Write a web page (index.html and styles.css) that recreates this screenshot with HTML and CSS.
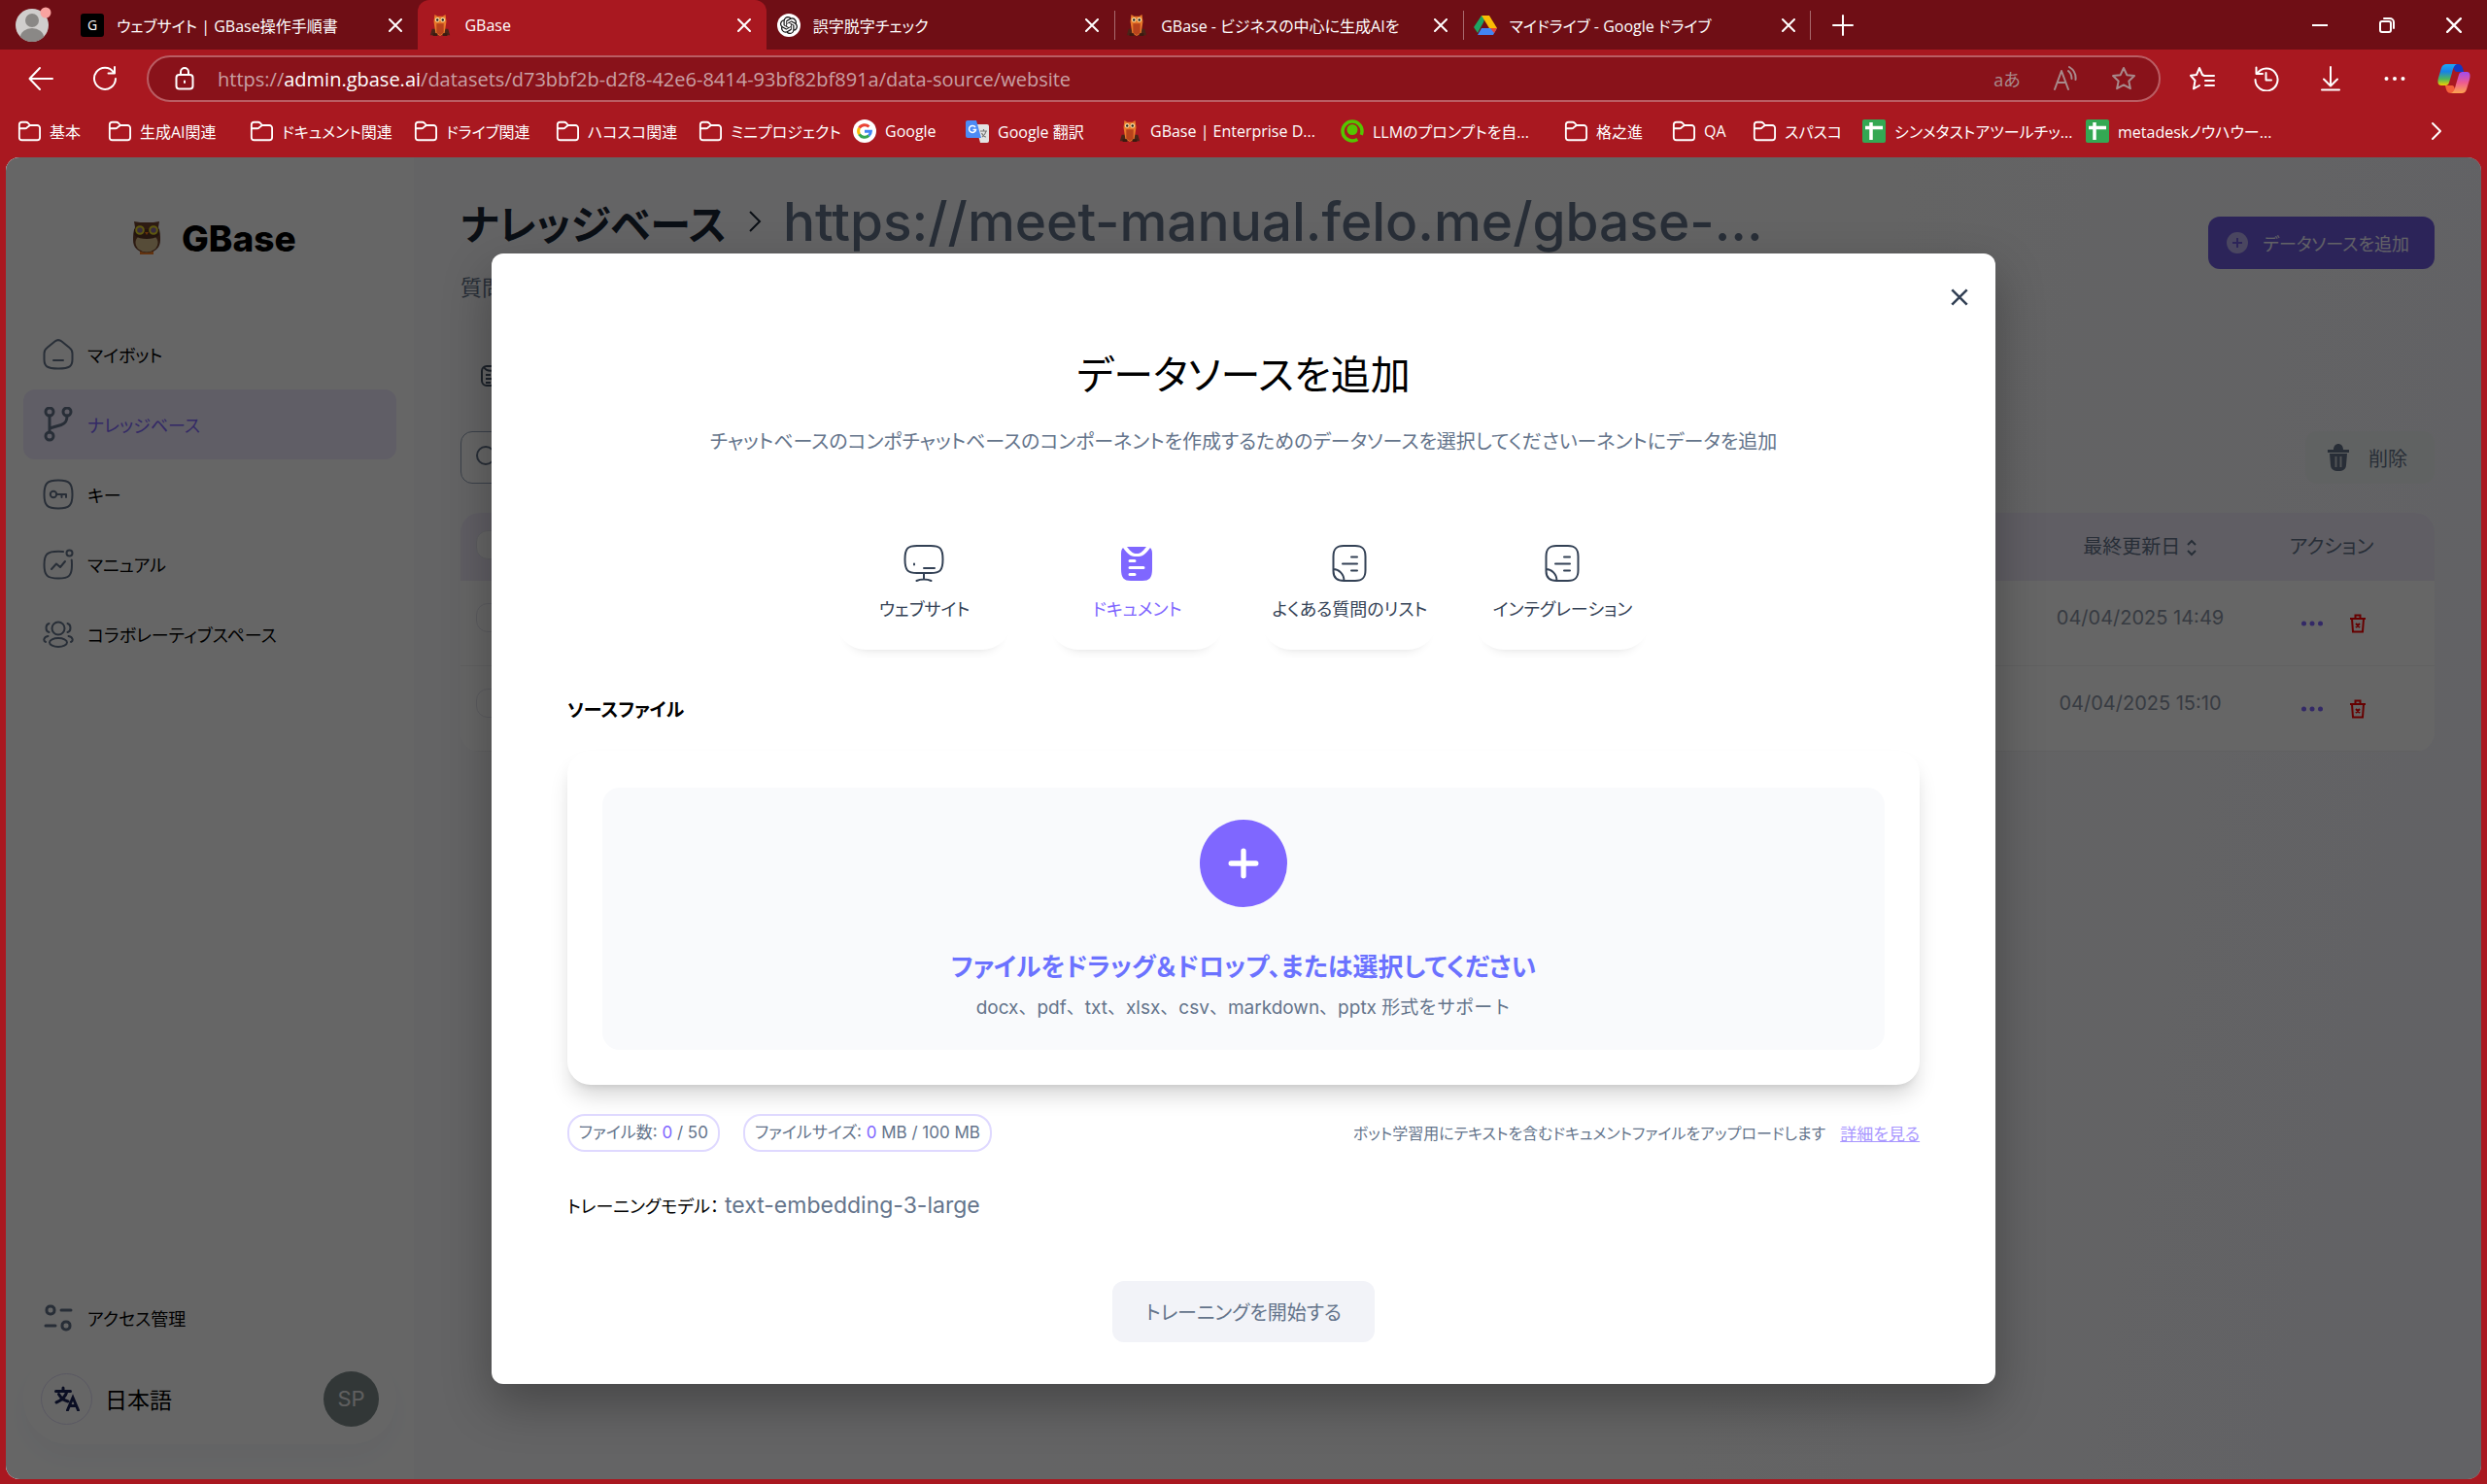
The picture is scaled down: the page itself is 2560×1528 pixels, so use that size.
FILE: index.html
```html
<!DOCTYPE html>
<html lang="ja">
<head>
<meta charset="utf-8">
<title>GBase</title>
<link rel="stylesheet" href="styles.css">
</head>
<body>
<svg class="defs" aria-hidden="true">
  <symbol id="x" viewBox="0 0 14 14"><path d="M1 1 13 13M13 1 1 13"/></symbol>
  <symbol id="folder" viewBox="0 0 26 26"><path d="M2 6a3 3 0 0 1 3-3h4.500a3 3 0 0 1 2.200 1L14 6.500h8a3 3 0 0 1 3 3V20a3 3 0 0 1-3 3H5a3 3 0 0 1-3-3zM2 10h6.500a3 3 0 0 0 2.200-1L14 6.500"/></symbol>
  <symbol id="owl-small" viewBox="0 0 24 26"><path fill="#4a2418" d="M3 17h18l2 7H1z"/><path fill="#e8792a" d="M6 1l3 2h6l3-2 1 8-2 13-5 3-5-3L5 9z"/><path fill="#b8431c" d="M8 11h8v10l-4 3-4-3z"/><circle cx="9" cy="7" r="2.600" fill="#f7d9a0"/><circle cx="15" cy="7" r="2.600" fill="#f7d9a0"/><circle cx="9" cy="7" r="1.300" fill="#222"/><circle cx="15" cy="7" r="1.300" fill="#222"/><path fill="#3a1a10" d="M4 22h5v3H4zM15 22h5v3h-5z"/></symbol>
  <symbol id="star" viewBox="0 0 26 26"><path d="M13 2l3.300 7.200 7.700.900-5.700 5.300 1.600 7.800L13 19.400l-6.900 3.800 1.600-7.800L2 10.100l7.700-.900z"/></symbol>
  <symbol id="sheet" viewBox="0 0 24 24"><rect width="24" height="24" rx="2" fill="#34a853"/><path d="M9 3v18M3 8.500h18" stroke="#fff" stroke-width="3.500"/></symbol>
  <symbol id="note" viewBox="0 0 36 40"><path d="M1.500 26V13C1.500 5 4.500 2 12 2h12c7.500 0 10.500 3 10.500 11v14c0 8-3 11-10.500 11H12.500M1.500 26c5.500 0 11 5 11 12M1.500 26v2c0 7 3.500 10 11 10M20 13.500h6M11 20.500h15M20 27.500h6"/></symbol>
  <symbol id="dots" viewBox="0 0 24 8"><circle cx="3.500" cy="4" r="2.500"/><circle cx="12" cy="4" r="2.500"/><circle cx="20.500" cy="4" r="2.500"/></symbol>
  <symbol id="bin" viewBox="0 0 18 20"><path d="M1 5h16M3 5l1 13.500h10L15 5M6.500 4.500V1.500h5v3M7 10l4 4M11 10l-4 4"/></symbol>
</svg>

<header class="browser">
  <div class="tabstrip">
    <div class="profile"><svg class="avatar" viewBox="0 0 38 38"><circle cx="18" cy="21" r="17" fill="#d0cecd"/><circle cx="18" cy="16" r="7" fill="#8a8886"/><path d="M6 33a12 9 0 0 1 24 0 17 17 0 0 1-24 0z" fill="#8a8886"/><circle cx="32" cy="8" r="5.500" fill="#f9a3a0"/></svg></div>
    <nav class="tabs" aria-label="タブ">
      <div class="tab"><svg class="fav" viewBox="0 0 24 24"><rect width="24" height="24" rx="3"/><text x="12" y="17" font-size="14" text-anchor="middle" fill="#fff">G</text></svg><span class="tab-title">ウェブサイト | GBase操作手順書</span><button class="tab-x" aria-label="閉じる"><svg class="line"><use href="#x"/></svg></button></div>
      <div class="tab active"><svg class="fav"><use href="#owl-small"/></svg><span class="tab-title">GBase</span><button class="tab-x" aria-label="閉じる"><svg class="line"><use href="#x"/></svg></button></div>
      <div class="tab"><svg class="fav" viewBox="-4 -4 32 32"><circle cx="12" cy="12" r="16" fill="#fff"/><path fill="#111" d="M22.2819 9.8211a5.9847 5.9847 0 0 0-.5157-4.9108 6.0462 6.0462 0 0 0-6.5098-2.9A6.0651 6.0651 0 0 0 4.9807 4.1818a5.9847 5.9847 0 0 0-3.9977 2.9 6.0462 6.0462 0 0 0 .7427 7.0966 5.98 5.98 0 0 0 .511 4.9107 6.051 6.051 0 0 0 6.5146 2.9001A5.9847 5.9847 0 0 0 13.2599 24a6.0557 6.0557 0 0 0 5.7718-4.2058 5.9894 5.9894 0 0 0 3.9977-2.9001 6.0557 6.0557 0 0 0-.7475-7.0729zm-9.022 12.6081a4.4755 4.4755 0 0 1-2.8764-1.0408l.1419-.0804 4.7783-2.7582a.7948.7948 0 0 0 .3927-.6813v-6.7369l2.02 1.1686a.071.071 0 0 1 .038.052v5.5826a4.504 4.504 0 0 1-4.4945 4.4944zm-9.6607-4.1254a4.4708 4.4708 0 0 1-.5346-3.0137l.142.0852 4.783 2.7582a.7712.7712 0 0 0 .7806 0l5.8428-3.3685v2.3324a.0804.0804 0 0 1-.0332.0615L9.74 19.9502a4.4992 4.4992 0 0 1-6.1408-1.6464zM2.3408 7.8956a4.485 4.485 0 0 1 2.3655-1.9728V11.6a.7664.7664 0 0 0 .3879.6765l5.8144 3.3543-2.0201 1.1685a.0757.0757 0 0 1-.071 0l-4.8303-2.7865A4.504 4.504 0 0 1 2.3408 7.8956zm16.5963 3.8558L13.1038 8.364 15.1192 7.2a.0757.0757 0 0 1 .071 0l4.8303 2.7913a4.4944 4.4944 0 0 1-.6765 8.1042v-5.6772a.79.79 0 0 0-.407-.667zm2.0107-3.0231l-.142-.0852-4.7735-2.7818a.7759.7759 0 0 0-.7854 0L9.409 9.2297V6.8974a.0662.0662 0 0 1 .0284-.0615l4.8303-2.7866a4.4992 4.4992 0 0 1 6.6802 4.66zM8.3065 12.863l-2.02-1.1638a.0804.0804 0 0 1-.038-.0567V6.0742a4.4992 4.4992 0 0 1 7.3757-3.4537l-.142.0805L8.704 5.459a.7948.7948 0 0 0-.3927.6813zm1.0976-2.3654l2.602-1.4998 2.6069 1.4998v2.9994l-2.5974 1.4997-2.6067-1.4997Z"/></svg><span class="tab-title">誤字脱字チェック</span><button class="tab-x" aria-label="閉じる"><svg class="line"><use href="#x"/></svg></button></div>
      <div class="tab ruled"><svg class="fav"><use href="#owl-small"/></svg><span class="tab-title">GBase - ビジネスの中心に生成AIを</span><button class="tab-x" aria-label="閉じる"><svg class="line"><use href="#x"/></svg></button></div>
      <div class="tab ruled last"><svg class="fav" viewBox="0 0 24 22"><path fill="#1ea362" d="M8 1h4l-2 7-6 11-4-6z"/><path fill="#fbbc04" d="M8 1h8l8 13h-8z"/><path fill="#4285f4" d="M4 21l4-7h16l-4 7z"/><path fill="#ea4335" d="M17 14h7l-3 5z"/></svg><span class="tab-title">マイドライブ - Google ドライブ</span><button class="tab-x" aria-label="閉じる"><svg class="line"><use href="#x"/></svg></button></div>
    </nav>
    <button class="newtab" aria-label="新しいタブ"><svg class="line" viewBox="0 0 22 22"><path d="M11 1v20M1 11h20"/></svg></button>
    <div class="winctl">
      <button aria-label="最小化"><svg class="line" viewBox="0 0 16 16"><path d="M0 8h16" stroke-width="2"/></svg></button>
      <button aria-label="元に戻す"><svg class="line" viewBox="0 0 16 16"><rect x="1" y="4" width="11" height="11" rx="2"/><path d="M5 1h6a4 4 0 0 1 4 4v6"/></svg></button>
      <button aria-label="ウィンドウを閉じる"><svg class="line"><use href="#x"/></svg></button>
    </div>
  </div>
  <div class="toolbar">
    <button class="tool" aria-label="戻る"><svg class="line" viewBox="0 0 26 26"><path d="M25 13H2M12 2 1.500 13 12 24"/></svg></button>
    <button class="tool" aria-label="更新"><svg class="line" viewBox="0 0 26 26"><path d="M22 6.500A11 11 0 1 0 24 13M23 1v6.500h-6.500"/></svg></button>
    <div class="address">
      <svg class="lock line" viewBox="0 0 20 24"><rect x="1.500" y="8" width="17" height="14.500" rx="3"/><path d="M6 8V5a4 4 0 0 1 8 0v3M10 14.500v1.500"/></svg>
      <span class="url">https://<b>admin.gbase.ai</b>/datasets/d73bbf2b-d2f8-42e6-8414-93bf82bf891a/data-source/website</span>
      <div class="address-tools">
        <button class="aa" aria-label="翻訳">aあ</button>
        <button aria-label="読み上げ"><svg class="line" viewBox="0 0 26 26"><path d="M2 24 9 5l7 19M4.500 17h9M16 5c2.500 2 3.500 5 3.500 8M17 1c5 3 7 8 6.500 13"/></svg></button>
        <button aria-label="お気に入りに追加"><svg class="line"><use href="#star"/></svg></button>
      </div>
    </div>
    <div class="tools">
      <button aria-label="お気に入り"><svg class="line" viewBox="0 0 26 26"><path d="M15 10l-2-1-3-7-3 7-6 .800 4.500 5.200L4 23.500l6-3.500M15 10h10M16 15h9M16 20h9"/></svg></button>
      <button aria-label="履歴"><svg class="line" viewBox="0 0 26 26"><path d="M3.500 7.500A11.500 11.500 0 1 1 1.500 14M2.500 1.500v6.500H9M12.500 7v7.500H18"/></svg></button>
      <button aria-label="ダウンロード"><svg class="line" viewBox="0 0 26 26"><path d="M13 1v19M6 13.500l7 7 7-7M4 24.500h18"/></svg></button>
      <button aria-label="設定"><svg class="solid" viewBox="0 0 26 26"><circle cx="4.500" cy="13" r="2"/><circle cx="13" cy="13" r="2"/><circle cx="21.500" cy="13" r="2"/></svg></button>
      <button class="copilot" aria-label="Copilot"><svg viewBox="0 0 34 32"><defs><linearGradient id="ca" x1="0" y1="0" x2="0" y2="1"><stop offset="0" stop-color="#1ba7f5"/><stop offset=".35" stop-color="#1782e8"/><stop offset=".7" stop-color="#4fb75a"/><stop offset="1" stop-color="#f3d000"/></linearGradient><linearGradient id="cb" x1="0" y1="0" x2="0" y2="1"><stop offset="0" stop-color="#a24bf0"/><stop offset=".5" stop-color="#ee5a90"/><stop offset="1" stop-color="#fca44e"/></linearGradient></defs><path fill="#1438c2" d="M17 1h4c4 0 5 3 6 8h-7c-3 0-4-5-3-8z"/><path fill="#f4603a" d="M8 23h7c3 0 3 5 4 8h-5c-4 0-5-3-6-8z"/><path fill="url(#ca)" d="M9 1h11c-3 1-4 5-5 9l-3 10c-1 3-3 3-5 3H4c-4 0-4-4-3-8L4 5c1-3 3-4 5-4z"/><path fill="url(#cb)" d="M25 31H14c3-1 4-5 5-9l3-10c1-3 3-3 5-3h3c4 0 4 4 3 8l-3 10c-1 3-3 4-5 4z"/></svg></button>
    </div>
  </div>
  <nav class="bookmarks" aria-label="お気に入りバー">
    <a href="#"><svg class="line"><use href="#folder"/></svg>基本</a>
    <a href="#"><svg class="line"><use href="#folder"/></svg>生成AI関連</a>
    <a href="#"><svg class="line"><use href="#folder"/></svg>ドキュメント関連</a>
    <a href="#"><svg class="line"><use href="#folder"/></svg>ドライブ関連</a>
    <a href="#"><svg class="line"><use href="#folder"/></svg>ハコスコ関連</a>
    <a href="#"><svg class="line"><use href="#folder"/></svg>ミニプロジェクト</a>
    <a href="#"><svg viewBox="0 0 24 24"><circle cx="12" cy="12" r="12" fill="#fff"/><g fill="none" stroke-width="3"><path stroke="#ea4335" d="M6.500 8.800A6.400 6.400 0 0 1 16.500 7.500"/><path stroke="#fbbc04" d="M6.500 8.800a6.400 6.400 0 0 0 0 6.400"/><path stroke="#34a853" d="M6.500 15.200a6.400 6.400 0 0 0 9.800 1.500"/><path stroke="#4285f4" d="M16.300 16.700a6.400 6.400 0 0 0 2.100-4.500H12"/></g></svg>Google</a>
    <a href="#"><svg viewBox="0 0 24 24"><path fill="#e3e3e3" d="M10 5h12a2 2 0 0 1 2 2v15a2 2 0 0 1-2 2h-7z"/><path fill="#4c8bf5" d="M2 1h9l5 18H2a2 2 0 0 1-2-2V3a2 2 0 0 1 2-2z"/><path fill="none" stroke="#fff" stroke-width="1.500" d="M10 8a3.500 3.500 0 1 0 .500 2.500H7.500"/><path fill="none" stroke="#777" stroke-width="1.200" d="M15 12h7M18.500 10v2M21 12c-.5 3-3 5-4 6M16.500 14c1 2 3 4 4.500 4"/></svg>Google 翻訳</a>
    <a href="#"><svg><use href="#owl-small"/></svg>GBase | Enterprise D...</a>
    <a href="#"><svg viewBox="0 0 24 24"><circle cx="12" cy="12" r="10" fill="none" stroke="#55c500" stroke-width="3.500" stroke-dasharray="57 6" stroke-dashoffset="-10"/><circle cx="12" cy="10.500" r="5.500" fill="#55c500"/></svg>LLMのプロンプトを自...</a>
    <a href="#"><svg class="line"><use href="#folder"/></svg>格之進</a>
    <a href="#"><svg class="line"><use href="#folder"/></svg>QA</a>
    <a href="#"><svg class="line"><use href="#folder"/></svg>スパスコ</a>
    <a href="#"><svg><use href="#sheet"/></svg>シンメタストアツールチッ...</a>
    <a href="#"><svg><use href="#sheet"/></svg>metadeskノウハウー...</a>
    <button class="more" aria-label="その他"><svg class="line" viewBox="0 0 12 20"><path d="M2 2l8 8-8 8"/></svg></button>
  </nav>
</header>

<div class="page">
  <aside class="sidebar">
    <div class="brand">
      <svg class="owl" viewBox="0 0 28 36"><path fill="#f4802a" d="M7 31h14v4H7z"/><path fill="#72452f" d="M1 1c4 1 8 1 13 1s9 0 13-1l-1 6c2 4 2 9 2 13 0 8-5 13-14 13S0 28 0 20C0 16 0 11 2 7z"/><ellipse cx="14" cy="23" rx="11.500" ry="9.500" fill="#d8bd8c"/><path fill="#5a3524" d="M1 9h26v6c-4 3-8 4-13 4S5 18 1 15z"/><g fill="#8d6b9c" stroke="#eadd28" stroke-width="2"><circle cx="7" cy="10" r="3.800"/><circle cx="21" cy="10" r="3.800"/></g><path fill="#ff7a1a" d="M12 12h4l-2 3z"/></svg>
      <span class="brand-name">GBase</span>
    </div>
    <nav class="menu">
      <a href="#"><svg viewBox="0 0 32 32"><path d="M1.500 15c0-3 1-4.500 3-6l8-6.500c2.500-2 4.500-2 7 0l8 6.500c2 1.500 3 3 3 6v6c0 7-2.500 9.500-14.500 9.500S1.500 28 1.500 21zM11 22h10"/></svg>マイボット</a>
      <a href="#" class="current"><svg class="bold" viewBox="0 0 32 36"><circle cx="7" cy="5" r="4"/><circle cx="25" cy="5" r="4"/><circle cx="7" cy="30" r="4"/><path d="M7 9v17M25 9c0 5-1 8-6 9.500L7 22"/></svg>ナレッジベース</a>
      <a href="#"><svg viewBox="0 0 32 32"><path d="M1.500 16C1.500 4.500 4.500 1.500 16 1.500S30.500 4.500 30.500 16 27.500 30.500 16 30.500 1.500 27.500 1.500 16zM14 16h10v3M19.500 16v3"/><circle cx="11" cy="16" r="3.200"/></svg>キー</a>
      <a href="#"><svg viewBox="0 0 32 32"><path d="M21 3c-1.500-.2-3-.2-5-.2C4.500 2.800 1.500 5.500 1.500 16.500S4.500 30.500 16 30.500 30 27.500 30 16.500c0-2 0-3.500-.3-5M9 21l5-5.500 4 3.500 5-6"/><circle cx="27.500" cy="4.500" r="3"/></svg>マニュアル</a>
      <a href="#"><svg viewBox="0 0 32 32"><circle cx="16" cy="10" r="6.500"/><ellipse cx="16" cy="24.500" rx="9" ry="4.500"/><path d="M6.500 5c-4 1-4 8 0 9M25.500 5c4 1 4 8 0 9M5.500 18c-5 1-5 5-2.500 6M26.500 18c5 1 5 5 2.500 6"/></svg>コラボレーティブスペース</a>
    </nav>
    <nav class="menu bottom-menu">
      <a href="#"><svg class="bold" viewBox="0 0 32 32"><rect x="4" y="4" width="8" height="8" rx="3.500"/><rect x="20" y="20" width="8" height="8" rx="3.500"/><path d="M19 8h10M3 24h10"/></svg>アクセス管理</a>
    </nav>
    <div class="account">
      <button class="lang" aria-label="言語"><svg viewBox="0 0 26 26"><path d="M9 2v3M1.500 5.500h15M13 5.500C11.500 11 7 15 2 17M4.500 8.500C7 13 10 15 14 16M13.500 25l5.500-13 5.500 13M15.500 20.500h7"/></svg></button>
      <span class="lang-name">日本語</span>
      <span class="initials">SP</span>
    </div>
  </aside>

  <main class="content">
    <div class="heading">
      <h1>ナレッジベース</h1>
      <svg class="crumb" viewBox="0 0 14 24"><path d="M2 2l10 10L2 22"/></svg>
      <span class="crumb-url">https://meet-manual.felo.me/gbase-...</span>
      <button class="add"><svg viewBox="0 0 22 22"><circle cx="11" cy="11" r="11" fill="#b9b0ef"/><path d="M11 6v10M6 11h10" stroke="#6e5adf" stroke-width="2"/></svg>データソースを追加</button>
    </div>
    <p class="lede">質問</p>
    <svg class="subtab" viewBox="0 0 20 22"><rect x="1" y="1" width="18" height="20" rx="5"/><path d="M3 2c3 5 11 5 14 0M5 10h5M5 14h10M5 18h5"/></svg>
    <div class="filters">
      <div class="search"><svg viewBox="0 0 24 24"><circle cx="10" cy="10" r="9"/><path d="M17 17l6 6"/></svg><input type="text" aria-label="検索"></div>
      <button class="delete"><svg viewBox="0 0 22 28"><path d="M0 6h6c0-8 10-8 10 0h6v3H0z"/><path d="M2 10h18l-1 12c-.4 4-3 6-8 6s-7.600-2-8-6z"/><path d="M8.500 13v11M13.500 13v11" stroke="#c8ccd4" stroke-width="2"/></svg>削除</button>
    </div>
    <table class="sources">
      <colgroup><col class="c-check"><col><col class="c-date"><col class="c-act"></colgroup>
      <thead><tr><th><input type="checkbox" aria-label="すべて選択"></th><th></th><th>最終更新日 <svg class="sort" viewBox="0 0 12 18"><path d="M2 6l4-4 4 4M2 12l4 4 4-4"/></svg></th><th>アクション</th></tr></thead>
      <tbody>
        <tr><td><input type="checkbox" aria-label="選択"></td><td></td><td>04/04/2025 14:49</td><td><div class="acts"><button aria-label="メニュー"><svg class="dots"><use href="#dots"/></svg></button><button aria-label="削除"><svg class="bin"><use href="#bin"/></svg></button></div></td></tr>
        <tr><td><input type="checkbox" aria-label="選択"></td><td></td><td>04/04/2025 15:10</td><td><div class="acts"><button aria-label="メニュー"><svg class="dots"><use href="#dots"/></svg></button><button aria-label="削除"><svg class="bin"><use href="#bin"/></svg></button></div></td></tr>
      </tbody>
    </table>
  </main>

  <div class="overlay">
    <section class="modal" role="dialog" aria-labelledby="dlg-title">
      <button class="close" aria-label="閉じる"><svg><use href="#x"/></svg></button>
      <h2 id="dlg-title">データソースを追加</h2>
      <p class="intro">チャットベースのコンポチャットベースのコンポーネントを作成するためのデータソースを選択してくださいーネントにデータを追加</p>
      <div class="kinds">
        <button class="kind"><svg viewBox="0 0 42 40"><path d="M1.500 16C1.500 4.500 4.500 2 14 2h14c9.500 0 12.500 2.500 12.500 14S37.500 30 28 30H14C4.500 30 1.500 27.500 1.500 16zM21 30v6M13.500 38c4-2 11-2 15 0M21 25h11M11 20.500v1"/></svg>ウェブサイト</button>
        <button class="kind selected"><svg viewBox="0 0 36 40"><path class="fill" d="M4 4c6 8 8 9 14 9s8-1 14-9c2 2 2 4 2 8v14c0 9-3 12-10 12H12C5 38 2 35 2 26V12c0-4 0-6 2-8z"/><path class="fill" d="M8 3h20c-5 6-6 7-10 7S13 9 8 3z"/><path class="cut" d="M11 17.500h5M11 24.500h14M11 31.500h5"/></svg>ドキュメント</button>
        <button class="kind"><svg><use href="#note"/></svg>よくある質問のリスト</button>
        <button class="kind"><svg><use href="#note"/></svg>インテグレーション</button>
      </div>
      <h3>ソースファイル</h3>
      <div class="upload">
        <button class="drop">
          <span class="plus"><svg viewBox="0 0 30 30"><path d="M15 3v24M3 15h24"/></svg></span>
          <span class="drop-title">ファイルをドラッグ＆ドロップ、または選択してください</span>
          <span class="drop-note">docx、pdf、txt、xlsx、csv、markdown、pptx 形式をサポート</span>
        </button>
      </div>
      <div class="limits">
        <span class="pill">ファイル数: <b>0</b> / 50</span>
        <span class="pill">ファイルサイズ: <b>0</b> MB / 100 MB</span>
        <span class="hint">ボット学習用にテキストを含むドキュメントファイルをアップロードします</span>
        <a href="#">詳細を見る</a>
      </div>
      <p class="model">トレーニングモデル：<span>text-embedding-3-large</span></p>
      <button class="start">トレーニングを開始する</button>
    </section>
  </div>
</div>
</body>
</html>
```
FILE: styles.css
```css
* { box-sizing: border-box; }
body {
  margin: 0;
  min-height: 100vh;
  display: flex;
  flex-direction: column;
  background: #a91820;
  color: #000;
  font-family: Inter, "Noto Sans CJK JP", sans-serif;
  font-size: 18px;
  font-feature-settings: "palt";
}
button, input { font: inherit; font-feature-settings: inherit; color: inherit; }
button { display: flex; align-items: center; justify-content: center; padding: 0; border: 0; background: none; white-space: nowrap; }
a { color: inherit; text-decoration: none; }
h1, h2, h3, p { margin: 0; }
svg { flex: none; }
.defs { position: absolute; width: 0; height: 0; }
.line { fill: none; stroke: currentColor; stroke-width: 2; stroke-linecap: round; stroke-linejoin: round; }
.solid { fill: currentColor; }

/* Browser window */
.browser { color: #fff; font-family: "Open Sans", "Noto Sans CJK JP", sans-serif; font-size: 16px; }
.tabstrip { display: flex; height: 51px; background: #6f0e15; }
.profile { width: 72px; padding: 5px 0 0 15px; }
.avatar { width: 38px; height: 38px; }
.tabs { display: flex; width: 1792px; }
.tab { flex: 1; min-width: 0; display: flex; align-items: center; padding: 0 16px 0 11px; gap: 13px; }
.tab.active { background: #a91820; border-radius: 12px 12px 0 0; }
.tab.ruled { background: linear-gradient(#a86a6e, #a86a6e) left center / 1px 30px no-repeat; }
.tab.last { background: linear-gradient(#a86a6e, #a86a6e) left center / 1px 30px no-repeat, linear-gradient(#a86a6e, #a86a6e) right center / 1px 30px no-repeat; }
.fav { width: 24px; height: 24px; }
.tab-title { flex: 1; min-width: 0; overflow: hidden; white-space: nowrap; }
.tab-x svg { width: 14px; height: 14px; }
.newtab { width: 66px; }
.newtab svg { width: 22px; height: 22px; }
.winctl { display: flex; margin-left: auto; }
.winctl button { width: 69px; }
.winctl svg { width: 16px; height: 16px; }
.toolbar { display: flex; align-items: center; height: 60px; padding: 0 6px 0 9px; }
.tool { width: 66px; }
.tool svg { width: 26px; height: 26px; }
.address { flex: 1; display: flex; align-items: center; height: 48px; margin: 0 10px; padding: 0 6px 0 27px; border: 2px solid #ba5d63; border-radius: 24px; background: #89121a; }
.lock { width: 20px; height: 24px; }
.url { flex: 1; padding-left: 24px; color: #c9a0a4; font-size: 20px; white-space: nowrap; }
.url b { color: #fff; font-weight: 400; }
.address-tools { display: flex; color: #a88a8c; }
.address-tools button { width: 60px; }
.address-tools .aa { font-size: 18px; }
.address-tools svg { width: 26px; height: 26px; }
.tools { display: flex; }
.tools button { width: 66px; }
.tools svg { width: 26px; height: 26px; }
.tools .copilot { width: 56px; }
.tools .copilot svg { width: 34px; height: 32px; }
.bookmarks {
  display: grid;
  grid-template-columns: 93px 146px 169px 146px 147px 159px 116px 157px 229px 230px 111px 83px 113px 230px 1fr auto;
  align-items: center;
  height: 51px;
  padding: 0 46px 3px 18px;
}
.bookmarks a { display: flex; align-items: center; gap: 9px; white-space: nowrap; }
.bookmarks svg { width: 24px; height: 24px; }
.bookmarks .more svg { width: 12px; height: 20px; }

/* Application */
.page { position: relative; flex: 1; display: flex; margin: 0 6px 5px; border-radius: 14px; overflow: hidden; background: linear-gradient(100deg, #f4f6ff, #fbfbfd 16%, #f9f9fb 70%, #f5f5fc); }
.sidebar { width: 420px; display: flex; flex-direction: column; padding: 0 18px 36px; background: #fff; }
.brand { display: flex; align-items: center; gap: 22px; height: 96px; margin-top: 35px; padding-left: 113px; }
.owl { width: 28px; height: 36px; }
.brand-name { font-size: 37px; font-weight: 800; }
.menu { margin-top: 36px; }
.menu a { display: flex; align-items: center; gap: 14px; height: 72px; padding-left: 20px; border-radius: 12px; }
.menu svg { width: 32px; height: 32px; fill: none; stroke: #64748b; stroke-width: 2; stroke-linecap: round; stroke-linejoin: round; }
.menu .bold { stroke-width: 3; }
.menu .current { background: #efebff; color: #7f67ff; }
.menu .current svg { height: 36px; }
.bottom-menu { margin-top: auto; }
.account { display: flex; align-items: center; height: 94px; padding: 0 18px; border-radius: 47px; box-shadow: 0 14px 30px #f6f8fc; }
.lang { width: 53px; height: 53px; border: 1px solid #e0dcf5; border-radius: 50%; }
.lang svg { width: 26px; height: 26px; fill: none; stroke: #1b2559; stroke-width: 3; stroke-linecap: round; }
.lang-name { margin-left: 13px; font-size: 23px; }
.initials { display: grid; place-items: center; width: 57px; height: 57px; margin-left: auto; border-radius: 50%; background: #7d8b8b; color: #eee; font-size: 22px; }
.content { flex: 1; min-width: 0; padding: 36px 48px 0; }
.heading { display: flex; align-items: center; height: 60px; white-space: nowrap; }
h1 { font-size: 42px; font-weight: 700; color: #1b2636; }
.crumb { width: 14px; height: 24px; margin: 0 22px; fill: none; stroke: #1b2636; stroke-width: 2; }
.crumb-url { color: #64748b; font-size: 55px; font-weight: 500; line-height: 60px; }
.add { gap: 15px; height: 54px; margin: 44px 0 0 auto; padding: 0 26px 0 19px; border-radius: 12px; background: #6e5adf; color: #f4f2ff; }
.add svg { width: 22px; height: 22px; }
.lede { height: 36px; margin-top: 20px; color: #64748b; font-size: 22px; line-height: 36px; }
.subtab { display: block; width: 20px; height: 22px; margin: 62px 0 0 21px; fill: none; stroke: #475569; stroke-width: 2; }
.filters { display: flex; justify-content: space-between; margin-top: 46px; }
.search { display: flex; align-items: center; width: 420px; height: 54px; padding-left: 15px; border: 1px solid #94a3b8; border-radius: 12px; background: #fff; }
.search svg { width: 24px; height: 24px; fill: none; stroke: #64748b; stroke-width: 2; }
.search input { flex: 1; min-width: 0; border: 0; background: none; }
.delete { gap: 20px; height: 54px; padding: 0 28px 0 23px; border-radius: 12px; background: #f1f4f5; color: #64748b; font-size: 20px; }
.delete svg { width: 22px; height: 28px; fill: #64748b; }
.sources { width: 100%; margin-top: 30px; border-collapse: separate; border-spacing: 0; table-layout: fixed; border-radius: 20px; overflow: hidden; background: #fff; }
.c-check { width: 80px; }
.c-date { width: 182px; }
.c-act { width: 212px; }
th { height: 70px; padding: 0 0 4px; background: #efecfb; color: #64748b; font-size: 20px; font-weight: 400; white-space: nowrap; }
td { height: 88px; padding: 0 0 12px; border-bottom: 1px solid #f0f0f3; color: #8b95a5; font-size: 20px; text-align: center; white-space: nowrap; }
.sources input { appearance: none; display: block; width: 48px; height: 30px; margin: 0 0 0 16px; border: 1px solid #e6e6ee; border-radius: 12px; background: #fff; }
.sort { width: 12px; height: 18px; fill: none; stroke: #64748b; stroke-width: 2; vertical-align: middle; }
.acts { display: flex; align-items: center; justify-content: center; gap: 26px; padding: 12px 0 0 4px; }
.dots { width: 24px; height: 8px; fill: #7f67ff; }
.bin { width: 18px; height: 20px; fill: none; stroke: #f00; stroke-width: 2; }

/* Dialog */
.overlay { position: absolute; inset: 0; display: flex; align-items: center; justify-content: center; background: rgba(0, 0, 0, .6); }
.modal { position: relative; width: calc(61% - 6px); display: flex; flex-direction: column; padding: 92px 78px 43px; border-radius: 12px; background: #fff; box-shadow: 0 20px 50px rgba(0, 0, 0, .3); }
.close { position: absolute; top: 36px; right: 28px; }
.close svg { width: 18px; height: 18px; fill: none; stroke: #334155; stroke-width: 2; }
h2 { font-size: 41px; font-weight: 400; line-height: 66px; text-align: center; }
.intro { margin-top: 18px; color: #64748b; font-size: 20px; line-height: 36px; text-align: center; }
.kinds { display: flex; justify-content: center; gap: 39px; margin-top: 66px; }
.kind { flex-direction: column; justify-content: flex-start; gap: 13px; width: 180px; height: 130px; padding-top: 21px; border-radius: 30px; color: #334155; line-height: 30px; box-shadow: 0 12px 12px -14px rgba(0, 0, 0, .2); }
.kind svg { width: 42px; height: 40px; fill: none; stroke: currentColor; stroke-width: 2; stroke-linecap: round; }
.kind.selected { color: #7f67ff; }
.kind .fill { fill: currentColor; stroke: none; }
.kind .cut { stroke: #fff; stroke-width: 3; }
h3 { margin-top: 45px; font-size: 19px; font-weight: 700; line-height: 36px; }
.upload { margin-top: 23px; padding: 38px 36px 36px; border-radius: 24px; background: #fff; box-shadow: 0 15px 22px -4px rgba(0, 0, 0, .16), 0 6px 8px -6px rgba(0, 0, 0, .14); }
.drop { flex-direction: column; justify-content: flex-start; width: 100%; height: 270px; padding-top: 33px; border-radius: 18px; background: #f9fafc; }
.plus { display: grid; place-items: center; width: 90px; height: 90px; border-radius: 50%; background: #7f67ff; }
.plus svg { width: 32px; height: 32px; fill: none; stroke: #fff; stroke-width: 5; stroke-linecap: round; }
.drop-title { margin-top: 41px; color: #6b72ff; font-size: 26px; font-weight: 700; line-height: 42px; }
.drop-note { margin-top: 5px; color: #64748b; font-size: 19px; line-height: 32px; font-feature-settings: normal; }
.limits { display: flex; align-items: center; margin-top: 30px; color: #64748b; font-size: 17px; white-space: nowrap; }
.pill { height: 39px; margin-right: 24px; padding: 0 10px; border: 2px solid #dfd9ff; border-radius: 18px; line-height: 35px; }
.pill b { color: #7f67ff; font-weight: 400; }
.hint { margin-left: auto; margin-right: 15px; font-size: 16px; }
.limits a { color: #a896ff; text-decoration: underline; }
.model { margin-top: 37px; line-height: 36px; }
.model span { margin-left: 6px; color: #64748b; font-size: 23px; }
.start { align-self: center; height: 63px; margin-top: 58px; padding: 0 34px; border-radius: 12px; background: #f2f3f8; color: #64748b; font-size: 20px; }
```
